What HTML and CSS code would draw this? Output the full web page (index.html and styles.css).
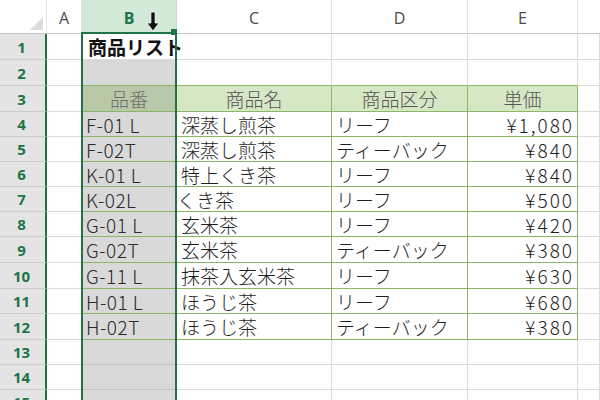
FILE: index.html
```html
<!DOCTYPE html>
<html lang="ja">
<head>
<meta charset="utf-8">
<link rel="stylesheet" href="styles.css">
</head>
<body>
<div class="sheet">
  <div class="hc corner"><span class="tri"></span></div>
  <div class="hc">A</div>
  <div class="hc hsel">B</div>
  <div class="hc">C</div>
  <div class="hc">D</div>
  <div class="hc">E</div>
  <div class="hc hlast"></div>

  <div class="rh">1</div>
  <div class="c"></div>
  <div class="c active title">商品リスト</div>
  <div class="c"></div>
  <div class="c"></div>
  <div class="c"></div>
  <div class="c"></div>

  <div class="rh">2</div>
  <div class="c"></div>
  <div class="c sel top"></div>
  <div class="c top"></div>
  <div class="c top"></div>
  <div class="c top"></div>
  <div class="c"></div>

  <div class="rh">3</div>
  <div class="c"></div>
  <div class="c tb selhead center">品番</div>
  <div class="c tb head center">商品名</div>
  <div class="c tb head center">商品区分</div>
  <div class="c tb head center">単価</div>
  <div class="c"></div>

  <div class="rh">4</div>
  <div class="c"></div>
  <div class="c tb sel code">F-01 L</div>
  <div class="c tb">深蒸し煎茶</div>
  <div class="c tb">リーフ</div>
  <div class="c tb num">¥1,080</div>
  <div class="c"></div>

  <div class="rh">5</div>
  <div class="c"></div>
  <div class="c tb sel code">F-02T</div>
  <div class="c tb">深蒸し煎茶</div>
  <div class="c tb">ティーバック</div>
  <div class="c tb num">¥840</div>
  <div class="c"></div>

  <div class="rh">6</div>
  <div class="c"></div>
  <div class="c tb sel code">K-01 L</div>
  <div class="c tb">特上くき茶</div>
  <div class="c tb">リーフ</div>
  <div class="c tb num">¥840</div>
  <div class="c"></div>

  <div class="rh">7</div>
  <div class="c"></div>
  <div class="c tb sel code">K-02L</div>
  <div class="c tb flush">くき茶</div>
  <div class="c tb">リーフ</div>
  <div class="c tb num">¥500</div>
  <div class="c"></div>

  <div class="rh">8</div>
  <div class="c"></div>
  <div class="c tb sel code">G-01 L</div>
  <div class="c tb">玄米茶</div>
  <div class="c tb">リーフ</div>
  <div class="c tb num">¥420</div>
  <div class="c"></div>

  <div class="rh">9</div>
  <div class="c"></div>
  <div class="c tb sel code">G-02T</div>
  <div class="c tb">玄米茶</div>
  <div class="c tb">ティーバック</div>
  <div class="c tb num">¥380</div>
  <div class="c"></div>

  <div class="rh">10</div>
  <div class="c"></div>
  <div class="c tb sel code">G-11 L</div>
  <div class="c tb">抹茶入玄米茶</div>
  <div class="c tb">リーフ</div>
  <div class="c tb num">¥630</div>
  <div class="c"></div>

  <div class="rh">11</div>
  <div class="c"></div>
  <div class="c tb sel code">H-01 L</div>
  <div class="c tb">ほうじ茶</div>
  <div class="c tb">リーフ</div>
  <div class="c tb num">¥680</div>
  <div class="c"></div>

  <div class="rh">12</div>
  <div class="c"></div>
  <div class="c tb sel code">H-02T</div>
  <div class="c tb">ほうじ茶</div>
  <div class="c tb">ティーバック</div>
  <div class="c tb num">¥380</div>
  <div class="c"></div>

  <div class="rh">13</div>
  <div class="c"></div>
  <div class="c sel"></div>
  <div class="c"></div>
  <div class="c"></div>
  <div class="c"></div>
  <div class="c"></div>

  <div class="rh">14</div>
  <div class="c"></div>
  <div class="c sel"></div>
  <div class="c"></div>
  <div class="c"></div>
  <div class="c"></div>
  <div class="c"></div>

  <div class="rh">15</div>
  <div class="c"></div>
  <div class="c sel"></div>
  <div class="c"></div>
  <div class="c"></div>
  <div class="c"></div>
  <div class="c"></div>

  <div class="selection"></div>
  <div class="handle"></div>
  <svg class="cursor" width="14" height="21" viewBox="0 0 14 21">
    <path d="M4.9 1 H9.1 V12 H13 L7 20 L1 12 H4.9 Z" fill="#111" stroke="#fff" stroke-width="0.8"/>
  </svg>
</div>
</body>
</html>
```

FILE: styles.css
```css
html, body {
  margin: 0;
  padding: 0;
  background: #fff;
}

body {
  width: 600px;
  height: 400px;
  overflow: hidden;
  font-family: "Noto Sans CJK JP", "Noto Sans", sans-serif;
}

.sheet {
  position: relative;
  display: grid;
  grid-template-columns: 47px 35px 95px 155px 136px 110px 1fr;
  grid-template-rows: 34px 26px 26px 26px 25px 25px 25px 25px 25px 26px 26px 25px 26px 25px 25px 25px;
  width: 600px;
  height: 400px;
  overflow: hidden;
}

/* column headers */
.hc {
  box-sizing: border-box;
  display: flex;
  align-items: center;
  justify-content: center;
  background: #fff;
  border-right: 1px solid #e2e2e2;
  border-bottom: 1px solid #c6c6c6;
  color: #4a4a4a;
  font-family: "Open Sans", "Noto Sans", sans-serif;
  font-size: 16px;
  padding-top: 2px;
}

.corner {
  position: relative;
  border-right: 1px solid #e2e2e2;
}

.tri {
  position: absolute;
  right: 3px;
  bottom: 3px;
  width: 0;
  height: 0;
  border-left: 13px solid transparent;
  border-bottom: 13px solid #dcdcdc;
}

.hsel {
  background: #d3e9d7;
  color: #217346;
  font-weight: 700;
  border-right-color: #c4dcc8;
}

.hlast {
  border-right: none;
}

/* row headers */
.rh {
  box-sizing: border-box;
  display: flex;
  align-items: center;
  justify-content: center;
  background: #e4e4e4;
  border-right: 2px solid #217346;
  border-bottom: 1px solid #cbcbcb;
  color: #217346;
  font-family: "Open Sans", "Noto Sans", sans-serif;
  font-weight: 700;
  font-size: 15px;
  padding-right: 2px;
}

/* cells */
.c {
  box-sizing: border-box;
  display: flex;
  align-items: center;
  border-right: 1px solid #dcdcdc;
  border-bottom: 1px solid #dcdcdc;
  padding: 0 4px;
  font-size: 19px;
  font-weight: 300;
  color: #1e1e1e;
  white-space: nowrap;
  overflow: hidden;
  min-width: 0;
}

.sel {
  background: #d9d9d9;
  border-bottom-color: #c3c3c3;
  color: #2a2a2a;
}

.code {
  letter-spacing: 0.5px;
  padding-left: 4px;
}

.active {
  background: #fff;
}

.title {
  overflow: visible;
  font-weight: 700;
  font-size: 19px;
  color: #111;
  padding-left: 6px;
}

.top {
  border-bottom-color: #8db56a;
}

.tb {
  border-right-color: #8db56a;
  border-bottom-color: #8db56a;
}

.head {
  background: #d6e7c5;
  color: #555;
}

.selhead {
  background: #b9c8a8;
  color: #6f6f6f;
}

.center {
  justify-content: center;
}

.num {
  justify-content: flex-end;
  padding-right: 3px;
  letter-spacing: 2px;
}

.flush {
  padding-left: 0;
}

/* overlays */
.selection {
  position: absolute;
  left: 81px;
  top: 32px;
  width: 96px;
  height: 380px;
  box-sizing: border-box;
  border: 2px solid #217346;
  border-bottom: none;
  pointer-events: none;
}

.handle {
  position: absolute;
  left: 171px;
  top: 29px;
  width: 6px;
  height: 6px;
  background: #217346;
}

.cursor {
  position: absolute;
  left: 146px;
  top: 11px;
}
```
